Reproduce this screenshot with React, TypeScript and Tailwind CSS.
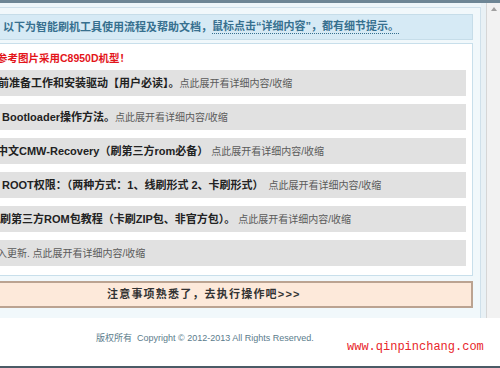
const rows: { bold: string; note: string; shift: string; gap: string }[] = [
  { bold: "前准备工作和安装驱动【用户必读】。", note: "点此展开看详细内容/收缩", shift: "-ml-[2px]", gap: "ml-0" },
  { bold: "Bootloader操作方法。", note: "点此展开看详细内容/收缩", shift: "ml-[2px]", gap: "ml-0" },
  { bold: "中文CMW-Recovery（刷第三方rom必备）", note: "点此展开看详细内容/收缩", shift: "-ml-[3px]", gap: "ml-[3px]" },
  { bold: "ROOT权限：（两种方式：1、线刷形式 2、卡刷形式）", note: "点此展开看详细内容/收缩", shift: "ml-[2px]", gap: "ml-[5px]" },
  { bold: "刷第三方ROM包教程（卡刷ZIP包、非官方包）。", note: "点此展开看详细内容/收缩", shift: "ml-0", gap: "ml-[3px]" },
  { bold: "", note: "入更新. 点此展开看详细内容/收缩", shift: "-ml-[3px]", gap: "ml-0" },
];

export default function App() {
  return (
    <div
      className="relative w-[500px] h-[368px] overflow-hidden bg-white flex flex-col"
      style={{ fontFamily: '"Liberation Sans", "Noto Sans CJK SC", sans-serif' }}
    >
      {/* top bar */}
      <div className="h-[3px] bg-[#6e8695] shrink-0" />

      <div className="flex h-[315px] shrink-0 bg-[#e9f1f5]">
        {/* main column */}
        <div className="w-[481px] pt-[4px] bg-[#eef6fa]">
          <div className="h-full border-t border-r border-[#cfe0ea] bg-[#f1f8fb] pt-[6px] pr-[7px]">
            {/* header */}
            <div className="h-[26px] bg-[#d6eaf5] border border-l-0 border-[#c6dde9] flex items-center pl-[3px] text-[11px] font-bold text-[#37708f] whitespace-nowrap">
              <span>以下为智能刷机工具使用流程及帮助文档，</span>
              <span className="border-b border-dotted border-[#37708f] leading-[13px]">
                鼠标点击“详细内容”，都有细节提示。
              </span>
            </div>

            {/* white panel */}
            <div className="mt-[3px] h-[233px] bg-white border border-l-0 border-[#c8dfeb] pt-[7px] pr-[6px]">
              <div className="h-[14px] -ml-[3px] text-[10.5px] leading-[14px] font-bold text-[#e3151a] whitespace-nowrap">
                参考图片采用C8950D机型！
              </div>
              <div className="mt-[5px] flex flex-col gap-[8px]">
                {rows.map((r, i) => (
                  <div key={i} className="h-[26px] bg-[#e1e1e1] flex items-center whitespace-nowrap overflow-hidden">
                    <span className={`${r.shift} text-[11px] font-bold text-[#222]`}>{r.bold}</span>
                    <span className={`${r.gap} text-[10px] text-[#5a5a5a]`}>{r.note}</span>
                  </div>
                ))}
              </div>
            </div>

            {/* action button */}
            <div className="mt-[5px] h-[27px] bg-[#fde9da] border-2 border-l-0 border-[#bba391] flex items-center pl-[107px] text-[11px] font-bold tracking-[1.2px] text-[#333] whitespace-nowrap">
              注意事项熟悉了，去执行操作吧&gt;&gt;&gt;
            </div>
          </div>
        </div>

        {/* scrollbar */}
        <div className="ml-[5px] w-[14px] bg-[#f2f2f2] border-l border-[#d6d6d6] flex justify-center pt-[4px]">
          <div className="w-0 h-0 border-l-[3px] border-r-[3px] border-b-[4px] border-l-transparent border-r-transparent border-b-[#a0a0a0]" />
        </div>
      </div>

      {/* footer */}
      <div className="h-[48px] shrink-0 bg-white pl-[96px] pt-[14px] text-[9px] text-[#5b7c8c] whitespace-nowrap">
        <span>版权所有</span>
        <span className="ml-[5px]">Copyright © 2012-2013 All Rights Reserved.</span>
      </div>

      <div className="h-[2px] shrink-0 bg-[#4b5b66]" />

      {/* watermark */}
      <div
        className="absolute left-[347px] top-[339px] text-[12px] leading-[16px] text-[#e8262b] whitespace-nowrap"
        style={{ fontFamily: '"Liberation Mono", monospace' }}
      >
        www.qinpinchang.com
      </div>
    </div>
  );
}
